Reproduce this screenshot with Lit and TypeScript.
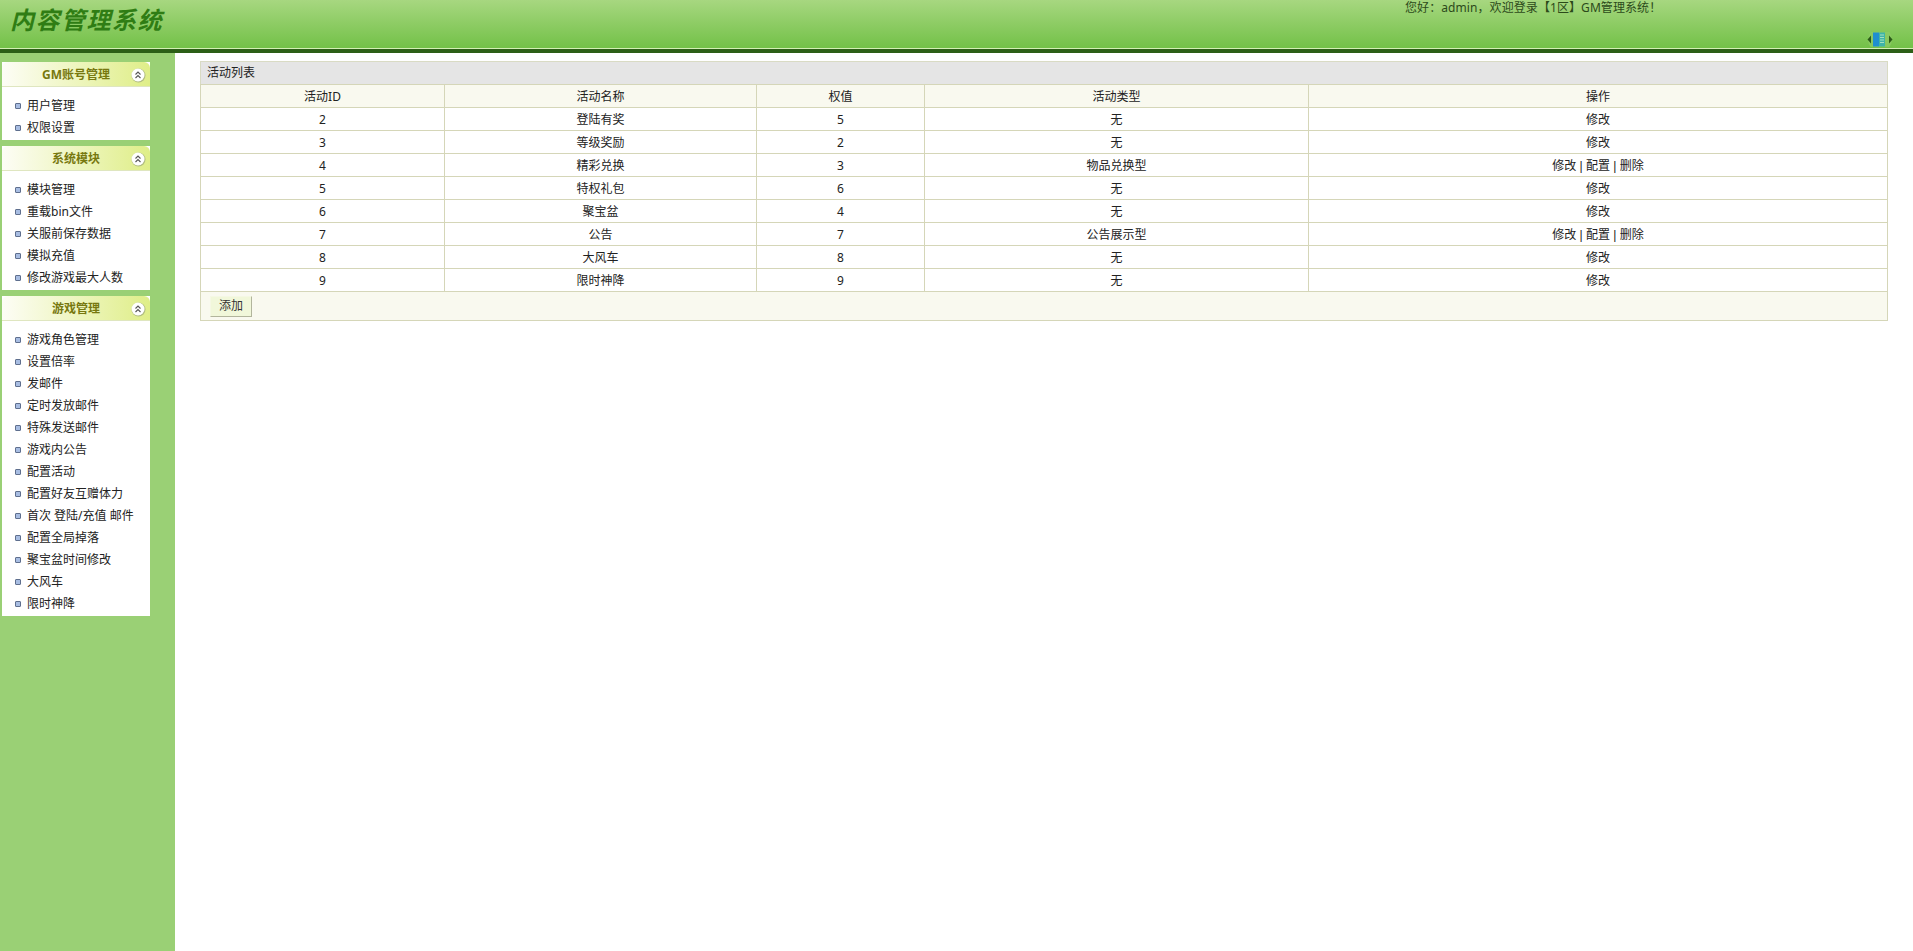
import { LitElement, html, css, svg } from "lit";
import { customElement } from "lit/decorators.js";

const menus = [
	{ title: "GM账号管理", items: ["用户管理", "权限设置"] },
	{
		title: "系统模块",
		items: ["模块管理", "重载bin文件", "关服前保存数据", "模拟充值", "修改游戏最大人数"],
	},
	{
		title: "游戏管理",
		items: [
			"游戏角色管理",
			"设置倍率",
			"发邮件",
			"定时发放邮件",
			"特殊发送邮件",
			"游戏内公告",
			"配置活动",
			"配置好友互赠体力",
			"首次 登陆/充值 邮件",
			"配置全局掉落",
			"聚宝盆时间修改",
			"大风车",
			"限时神降",
		],
	},
];

const rows = [
	{ id: 2, name: "登陆有奖", weight: 5, type: "无", full: false },
	{ id: 3, name: "等级奖励", weight: 2, type: "无", full: false },
	{ id: 4, name: "精彩兑换", weight: 3, type: "物品兑换型", full: true },
	{ id: 5, name: "特权礼包", weight: 6, type: "无", full: false },
	{ id: 6, name: "聚宝盆", weight: 4, type: "无", full: false },
	{ id: 7, name: "公告", weight: 7, type: "公告展示型", full: true },
	{ id: 8, name: "大风车", weight: 8, type: "无", full: false },
	{ id: 9, name: "限时神降", weight: 9, type: "无", full: false },
];

const collapseIcon = svg`
	<svg class="collapse" width="16" height="16" viewBox="0 0 16 16">
		<circle cx="8.500" cy="8.500" r="7" fill="#9da67c" opacity="0.7"></circle>
		<circle cx="8" cy="8" r="6.500" fill="#fff"></circle>
		<path d="M5.500 7.500 8 5l2.500 2.500M5.500 11 8 8.500l2.500 2.500" fill="none" stroke="#555" stroke-width="1.100"></path>
	</svg>
`;

const toggleIcon = svg`
	<svg width="26" height="15" viewBox="0 0 26 15">
		<circle cx="13" cy="7.500" r="12" fill="#8fcb66" opacity="0.7"></circle>
		<path d="M4 3.500v8L0.500 7.500zM22 3.500v8l3.500-4z" fill="#2a5a18"></path>
		<rect x="6" y="0.500" width="6" height="14" fill="#1f8fd0"></rect>
		<rect x="12" y="0.500" width="6" height="14" fill="#3fb4a8"></rect>
		<path d="M13 3h4M13 5.500h4M13 8h4M13 10.500h4" stroke="#a6e0c0" stroke-width="1"></path>
	</svg>
`;

@customElement("app-root")
export class AppRoot extends LitElement {
	static styles = css`
		:host {
			display: flex;
			flex-direction: column;
			height: 100vh;
			overflow: hidden;
			background: #fff;
			color: #222;
			font: 12px/1.5 "Noto Sans", "Noto Sans CJK SC", sans-serif;
		}

		.header {
			flex: none;
			display: flex;
			justify-content: space-between;
			height: 48px;
			background: linear-gradient(#a7d780, #73c148);
			border-bottom: 1px solid #d3efb4;
			box-shadow: 0 4px 0 #2c5f17;
			margin-bottom: 4px;
			position: relative;
			z-index: 1;
		}

		.logo {
			margin: 2px 0 0 10px;
			font-size: 24px;
			line-height: 36px;
			font-weight: 700;
			font-style: italic;
			letter-spacing: 1.5px;
			color: #2f7d14;
		}

		.user {
			width: 508px;
			display: flex;
			flex-direction: column;
			justify-content: space-between;
		}

		.welcome {
			line-height: 16px;
			letter-spacing: 0.08px;
			color: #2c4a1a;
		}

		.toggle {
			align-self: flex-end;
			margin: 0 20px 1px 0;
			line-height: 0;
		}

		.body {
			flex: 1;
			display: flex;
			min-height: 0;
		}

		.sidebar {
			flex: none;
			width: 175px;
			box-sizing: border-box;
			padding: 9px 0 0 2px;
			background: #9ad075;
		}

		.panel {
			width: 148px;
			margin-bottom: 6px;
			background: #fff;
		}

		.panel-head {
			position: relative;
			height: 23px;
			padding-top: 1px;
			line-height: 24px;
			border-radius: 6px 6px 0 0;
			border-bottom: 1px solid #dfe6c0;
			background: linear-gradient(90deg, #fdfdf6, #dfee88);
			text-align: center;
			font-weight: 700;
			color: #77780f;
		}

		.collapse {
			position: absolute;
			top: 5px;
			right: 4px;
		}

		.panel-list {
			list-style: none;
			margin: 0;
			padding: 8px 0 1px 0;
		}

		.panel-list li {
			display: flex;
			align-items: center;
			gap: 6px;
			height: 22px;
			padding-left: 13px;
			color: #222;
		}

		.dot {
			width: 4px;
			height: 4px;
			border: 1px solid #5f6f8e;
			border-radius: 1px;
			background: #a8bde2;
		}

		.main {
			flex: 1;
			padding: 8px 25px 0;
		}

		table {
			width: 100%;
			table-layout: fixed;
			border-collapse: collapse;
			border: 1px solid #d5d6b8;
		}

		caption {
			box-sizing: border-box;
			height: 23px;
			line-height: 22px;
			padding-left: 6px;
			text-align: left;
			background: #e5e5e5;
			border: 1px solid #d9dbc4;
			border-bottom: 0;
		}

		th,
		td {
			height: 21px;
			padding: 1px 0 0;
			border: 1px solid #d5d6b8;
			text-align: center;
			font-weight: 400;
		}

		th {
			background: #f9f9ef;
		}

		.ops {
			font-family: "Liberation Sans", "Noto Sans CJK SC", sans-serif;
		}

		td.actions {
			background: #f9f9ef;
			height: 28px;
			padding: 0 0 0 9px;
			text-align: left;
		}

		button {
			display: block;
			width: 42px;
			height: 21px;
			padding: 0;
			font: inherit;
			color: #333;
			background: #f1f7da;
			border: 1px solid #f5f8e4;
			border-right-color: #b2b59c;
			border-bottom-color: #b2b59c;
		}
	`;

	render() {
		return html`
			<div class="header">
				<div class="logo">内容管理系统</div>
				<div class="user">
					<div class="welcome">您好：admin，欢迎登录【1区】GM管理系统！</div>
					<div class="toggle">${toggleIcon}</div>
				</div>
			</div>
			<div class="body">
				<div class="sidebar">
					${menus.map(
						(menu) => html`
							<div class="panel">
								<div class="panel-head">${menu.title}${collapseIcon}</div>
								<ul class="panel-list">
									${menu.items.map(
										(item) => html`<li><span class="dot"></span>${item}</li>`
									)}
								</ul>
							</div>
						`
					)}
				</div>
				<div class="main">
					<table>
						<caption>
							活动列表
						</caption>
						<colgroup>
							<col style="width:244px" />
							<col style="width:312px" />
							<col style="width:168px" />
							<col style="width:384px" />
							<col />
						</colgroup>
						<tr>
							<th>活动ID</th>
							<th>活动名称</th>
							<th>权值</th>
							<th>活动类型</th>
							<th>操作</th>
						</tr>
						${rows.map(
							(row) => html`
								<tr>
									<td>${row.id}</td>
									<td>${row.name}</td>
									<td>${row.weight}</td>
									<td>${row.type}</td>
									<td class="ops">${row.full ? "修改 | 配置 | 删除" : "修改"}</td>
								</tr>
							`
						)}
						<tr>
							<td class="actions" colspan="5"><button>添加</button></td>
						</tr>
					</table>
				</div>
			</div>
		`;
	}
}
